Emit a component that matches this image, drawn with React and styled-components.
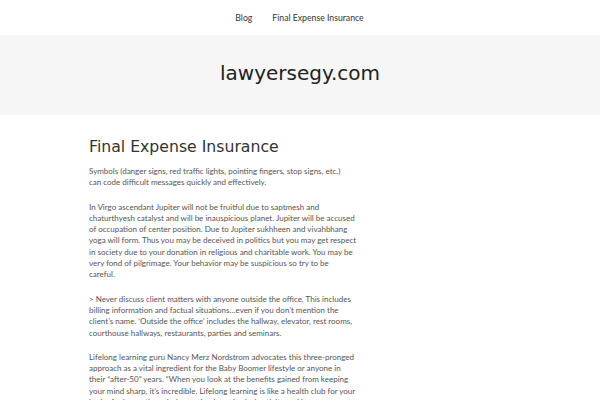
import React from 'react'
import styled, { createGlobalStyle } from 'styled-components'

const Global = createGlobalStyle`
  html, body { margin: 0; padding: 0; background: #fff; }
  body { font-family: Lato, "Open Sans", sans-serif; }
  * { box-sizing: border-box; }
`

const App = () => {
  return (
    <>
      <Global />
      <TopBar>
        <NavLink>Blog</NavLink>
        <NavLink>Final Expense Insurance</NavLink>
      </TopBar>
      <Masthead>
        <SiteTitle>lawyersegy.com</SiteTitle>
      </Masthead>
      <Main>
        <Article>
          <h1>Final Expense Insurance</h1>
          <p>Symbols (danger signs, red traffic lights, pointing fingers, stop signs, etc.)<br />can code difficult messages quickly and effectively.</p>
          <p>In Virgo ascendant Jupiter will not be fruitful due to saptmesh and chaturthyesh catalyst and will be inauspicious planet. Jupiter will be accused of occupation of center position. Due to Jupiter sukhheen and vivahbhang yoga will form. Thus you may be deceived in politics but you may get respect in society due to your donation in religious and charitable work. You may be very fond of pilgrimage. Your behavior may be suspicious so try to be<br />careful.</p>
          <p>&gt; Never discuss client matters with anyone outside the office. This includes billing information and factual situations…even if you don’t mention the client’s name. ‘Outside the office’ includes the hallway, elevator, rest rooms, courthouse hallways, restaurants, parties and seminars.</p>
          <p>Lifelong learning guru Nancy Merz Nordstrom advocates this three-pronged approach as a vital ingredient for the Baby Boomer lifestyle or anyone in their “after-50” years. “When you look at the benefits gained from keeping your mind sharp, it’s incredible. Lifelong learning is like a health club for your brain. And an active mind can stimulate physical activity and keep your spirits up.”</p>
        </Article>
      </Main>
    </>
  )
}

export default App

const TopBar = styled.nav`
  height: 35px;
  display: flex;
  justify-content: center;
  align-items: center;
  gap: 20px;
  padding-right: 1px;
`

const NavLink = styled.a`
  font-size: 8.7px;
  color: #333;
  cursor: pointer;
`

const Masthead = styled.header`
  height: 80px;
  background: #f6f6f6;
  display: flex;
  justify-content: center;
  align-items: center;
`

const SiteTitle = styled.div`
  font-family: "DejaVu Sans", Verdana, sans-serif;
  font-size: 20px;
  color: #222;
  margin-top: -4px;
`

const Main = styled.main`
  padding: 22px 0 0 89px;
`

const Article = styled.article`
  width: 269px;
  h1 {
    font-family: "DejaVu Sans", Verdana, sans-serif;
    font-size: 15.7px;
    font-weight: 400;
    color: #333;
    margin: 0 0 10px;
  }
  p {
    font-size: 8px;
    line-height: 11.3px;
    color: #555;
    margin: 0 0 13px;
  }
`
